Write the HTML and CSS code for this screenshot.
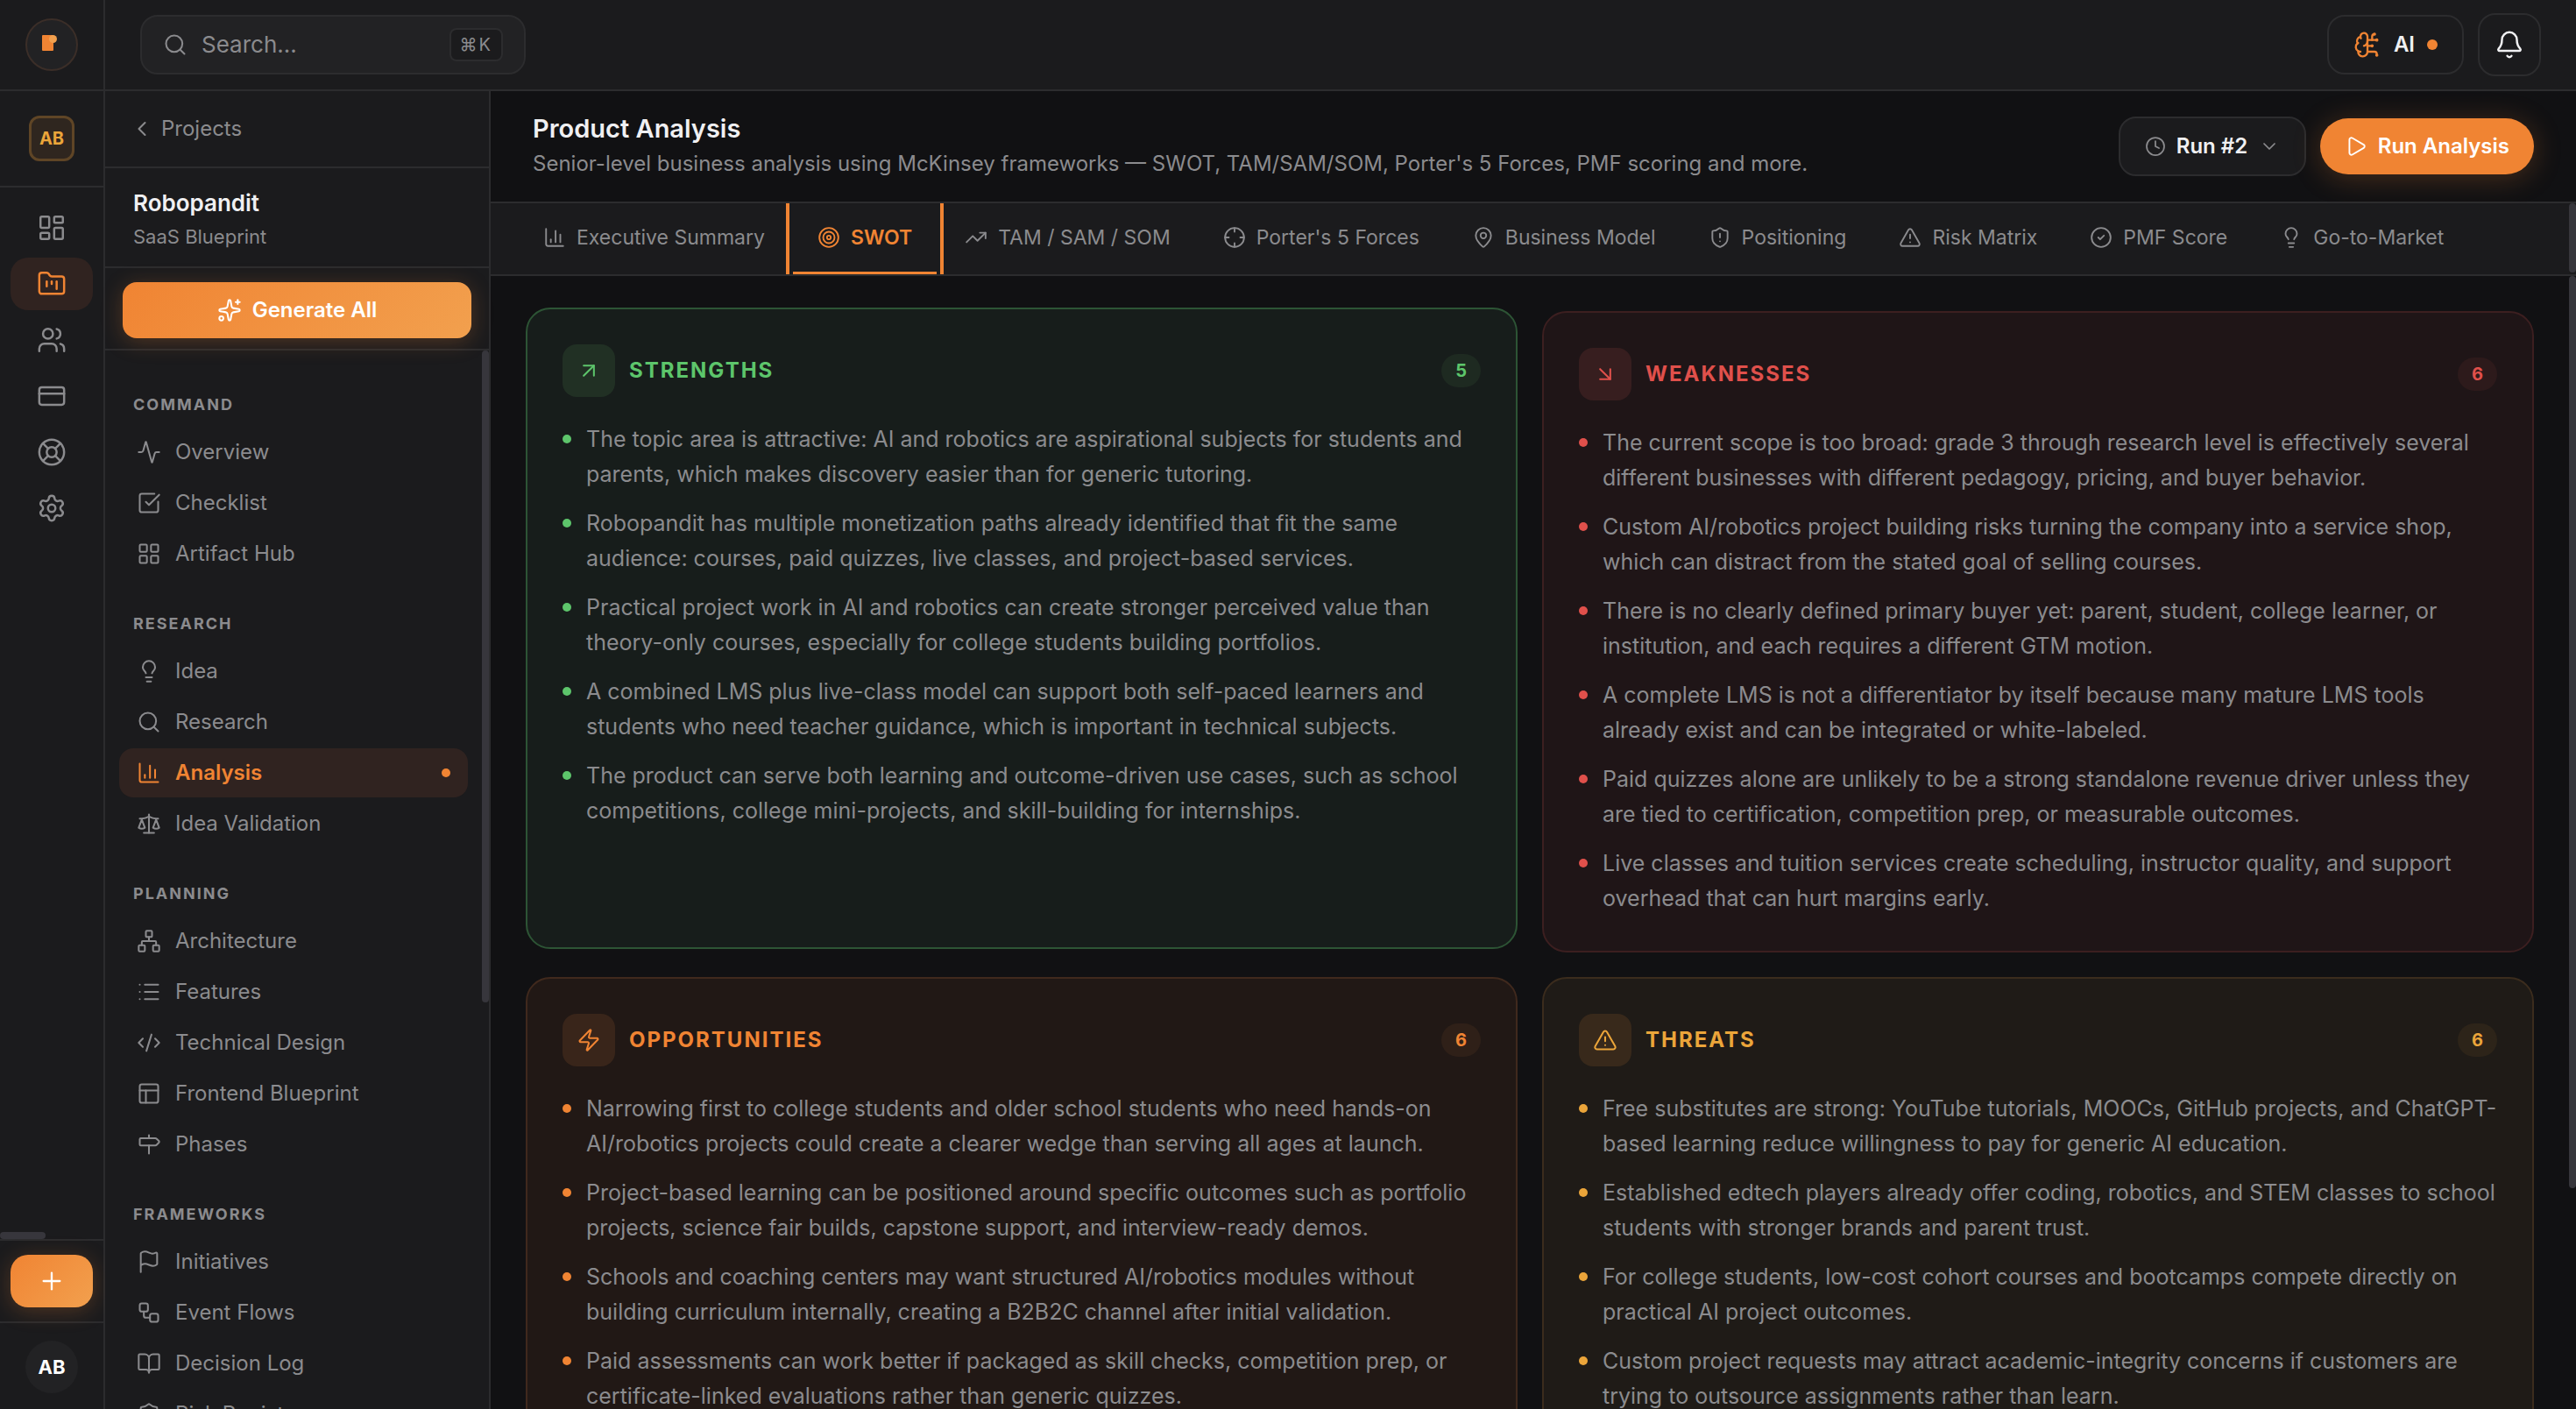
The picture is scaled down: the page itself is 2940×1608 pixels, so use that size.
FILE: index.html
```html
<!DOCTYPE html>
<html lang="en">
	<head>
		<meta charset="UTF-8" />
		<meta name="viewport" content="width=device-width, initial-scale=1.0" />
		<title>Product Analysis - Robopandit</title>
		<link rel="stylesheet" href="styles.css">
	</head>
	<body>
		<!-- icon sprite -->
		<svg class="sprite" aria-hidden="true">
			<symbol id="i-search" viewBox="0 0 24 24"><path d="m21 21-4.34-4.34" /><circle cx="11" cy="11" r="8" /></symbol>
			<symbol id="i-brain" viewBox="0 0 24 24"><path d="M12 5a3 3 0 1 0-5.997.125 4 4 0 0 0-2.526 5.77 4 4 0 0 0 .556 6.588A4 4 0 1 0 12 18Z" /><path d="M9 13a4.5 4.5 0 0 0 3-4" /><path d="M6.003 5.125A3 3 0 0 0 6.401 6.5" /><path d="M3.477 10.896a4 4 0 0 1 .585-.396" /><path d="M6 18a4 4 0 0 1-1.967-.516" /><path d="M12 13h4" /><path d="M12 18h6a2 2 0 0 1 2 2v1" /><path d="M12 8h8" /><path d="M16 8V5a2 2 0 0 1 2-2" /><circle cx="16" cy="13" r=".5" /><circle cx="18" cy="3" r=".5" /><circle cx="20" cy="21" r=".5" /><circle cx="20" cy="8" r=".5" /></symbol>
			<symbol id="i-bell" viewBox="0 0 24 24"><path d="M10.268 21a2 2 0 0 0 3.464 0" /><path d="M3.262 15.326A1 1 0 0 0 4 17h16a1 1 0 0 0 .74-1.673C19.41 13.956 18 12.499 18 8A6 6 0 0 0 6 8c0 4.499-1.411 5.956-2.738 7.326" /></symbol>
			<symbol id="i-dashboard" viewBox="0 0 24 24"><rect width="7" height="9" x="3" y="3" rx="1" /><rect width="7" height="5" x="14" y="3" rx="1" /><rect width="7" height="9" x="14" y="12" rx="1" /><rect width="7" height="5" x="3" y="16" rx="1" /></symbol>
			<symbol id="i-kanban" viewBox="0 0 24 24"><path d="M4 20h16a2 2 0 0 0 2-2V8a2 2 0 0 0-2-2h-7.93a2 2 0 0 1-1.66-.9l-.82-1.2A2 2 0 0 0 7.93 3H4a2 2 0 0 0-2 2v13c0 1.1.9 2 2 2Z" /><path d="M8 10v4" /><path d="M12 10v2" /><path d="M16 10v6" /></symbol>
			<symbol id="i-users" viewBox="0 0 24 24"><path d="M16 21v-2a4 4 0 0 0-4-4H6a4 4 0 0 0-4 4v2" /><path d="M16 3.128a4 4 0 0 1 0 7.744" /><path d="M22 21v-2a4 4 0 0 0-3-3.87" /><circle cx="9" cy="7" r="4" /></symbol>
			<symbol id="i-card" viewBox="0 0 24 24"><rect width="20" height="14" x="2" y="5" rx="2" /><path d="M2 10h20" /></symbol>
			<symbol id="i-help" viewBox="0 0 24 24"><circle cx="12" cy="12" r="10" /><path d="m4.93 4.93 4.24 4.24" /><path d="m14.83 9.17 4.24-4.24" /><path d="m14.83 14.83 4.24 4.24" /><path d="m9.17 14.83-4.24 4.24" /><circle cx="12" cy="12" r="4" /></symbol>
			<symbol id="i-settings" viewBox="0 0 24 24"><path d="M9.671 4.136a2.34 2.34 0 0 1 4.659 0 2.34 2.34 0 0 0 3.319 1.915 2.34 2.34 0 0 1 2.33 4.033 2.34 2.34 0 0 0 0 3.831 2.34 2.34 0 0 1-2.33 4.033 2.34 2.34 0 0 0-3.319 1.915 2.34 2.34 0 0 1-4.659 0 2.34 2.34 0 0 0-3.32-1.915 2.34 2.34 0 0 1-2.33-4.033 2.34 2.34 0 0 0 0-3.831A2.34 2.34 0 0 1 6.35 6.051a2.34 2.34 0 0 0 3.319-1.915" /><circle cx="12" cy="12" r="3" /></symbol>
			<symbol id="i-plus" viewBox="0 0 24 24"><path d="M5 12h14" /><path d="M12 5v14" /></symbol>
			<symbol id="i-left" viewBox="0 0 24 24"><path d="m15 18-6-6 6-6" /></symbol>
			<symbol id="i-down" viewBox="0 0 24 24"><path d="m6 9 6 6 6-6" /></symbol>
			<symbol id="i-sparkles" viewBox="0 0 24 24"><path d="M11.017 2.814a1 1 0 0 1 1.966 0l1.051 5.558a2 2 0 0 0 1.594 1.594l5.558 1.051a1 1 0 0 1 0 1.966l-5.558 1.051a2 2 0 0 0-1.594 1.594l-1.051 5.558a1 1 0 0 1-1.966 0l-1.051-5.558a2 2 0 0 0-1.594-1.594l-5.558-1.051a1 1 0 0 1 0-1.966l5.558-1.051a2 2 0 0 0 1.594-1.594z" /><path d="M20 2v4" /><path d="M22 4h-4" /><circle cx="4" cy="20" r="2" /></symbol>
			<symbol id="i-activity" viewBox="0 0 24 24"><path d="M22 12h-2.48a2 2 0 0 0-1.93 1.46l-2.35 8.36a.25.25 0 0 1-.48 0L9.24 2.18a.25.25 0 0 0-.48 0l-2.35 8.36A2 2 0 0 1 4.49 12H2" /></symbol>
			<symbol id="i-check" viewBox="0 0 24 24"><path d="M21 10.656V19a2 2 0 0 1-2 2H5a2 2 0 0 1-2-2V5a2 2 0 0 1 2-2h12.344" /><path d="m9 11 3 3L22 4" /></symbol>
			<symbol id="i-grid" viewBox="0 0 24 24"><rect width="7" height="7" x="3" y="3" rx="1" /><rect width="7" height="7" x="14" y="3" rx="1" /><rect width="7" height="7" x="14" y="14" rx="1" /><rect width="7" height="7" x="3" y="14" rx="1" /></symbol>
			<symbol id="i-bulb" viewBox="0 0 24 24"><path d="M15 14c.2-1 .7-1.7 1.5-2.5 1-.9 1.5-2.2 1.5-3.5A6 6 0 0 0 6 8c0 1 .2 2.2 1.5 3.5.7.7 1.3 1.5 1.5 2.5" /><path d="M9 18h6" /><path d="M10 22h4" /></symbol>
			<symbol id="i-chart" viewBox="0 0 24 24"><path d="M3 3v16a2 2 0 0 0 2 2h16" /><path d="M18 17V9" /><path d="M13 17V5" /><path d="M8 17v-3" /></symbol>
			<symbol id="i-scale" viewBox="0 0 24 24"><path d="m16 16 3-8 3 8c-.87.65-1.92 1-3 1s-2.13-.35-3-1Z" /><path d="m2 16 3-8 3 8c-.87.65-1.92 1-3 1s-2.13-.35-3-1Z" /><path d="M7 21h10" /><path d="M12 3v18" /><path d="M3 7h2c2 0 5-1 7-2 2 1 5 2 7 2h2" /></symbol>
			<symbol id="i-network" viewBox="0 0 24 24"><rect x="16" y="16" width="6" height="6" rx="1" /><rect x="2" y="16" width="6" height="6" rx="1" /><rect x="9" y="2" width="6" height="6" rx="1" /><path d="M5 16v-3a1 1 0 0 1 1-1h12a1 1 0 0 1 1 1v3" /><path d="M12 12V8" /></symbol>
			<symbol id="i-list" viewBox="0 0 24 24"><path d="M3 5h.01" /><path d="M3 12h.01" /><path d="M3 19h.01" /><path d="M8 5h13" /><path d="M8 12h13" /><path d="M8 19h13" /></symbol>
			<symbol id="i-code" viewBox="0 0 24 24"><path d="m18 16 4-4-4-4" /><path d="m6 8-4 4 4 4" /><path d="m14.5 4-5 16" /></symbol>
			<symbol id="i-panels" viewBox="0 0 24 24"><rect width="18" height="18" x="3" y="3" rx="2" /><path d="M3 9h18" /><path d="M9 21V9" /></symbol>
			<symbol id="i-signpost" viewBox="0 0 24 24"><path d="M12 13v8" /><path d="M12 3v3" /><path d="M18.172 6a2 2 0 0 1 1.414.586l2.06 2.06a1.207 1.207 0 0 1 0 1.708l-2.06 2.06a2 2 0 0 1-1.414.586H4a1 1 0 0 1-1-1V7a1 1 0 0 1 1-1z" /></symbol>
			<symbol id="i-flag" viewBox="0 0 24 24"><path d="M4 22V4a1 1 0 0 1 .4-.8A6 6 0 0 1 8 2c3 0 5 2 7.333 2q2 0 3.067-.8A1 1 0 0 1 20 4v10a1 1 0 0 1-.4.8A6 6 0 0 1 16 16c-3 0-5-2-8-2a6 6 0 0 0-4 1.528" /></symbol>
			<symbol id="i-flow" viewBox="0 0 24 24"><rect width="8" height="8" x="3" y="3" rx="2" /><path d="M7 11v4a2 2 0 0 0 2 2h4" /><rect width="8" height="8" x="13" y="13" rx="2" /></symbol>
			<symbol id="i-book" viewBox="0 0 24 24"><path d="M12 7v14" /><path d="M3 18a1 1 0 0 1-1-1V4a1 1 0 0 1 1-1h5a4 4 0 0 1 4 4 4 4 0 0 1 4-4h5a1 1 0 0 1 1 1v13a1 1 0 0 1-1 1h-6a3 3 0 0 0-3 3 3 3 0 0 0-3-3z" /></symbol>
			<symbol id="i-shield" viewBox="0 0 24 24"><path d="M20 13c0 5-3.5 7.5-7.66 8.95a1 1 0 0 1-.67-.01C7.5 20.5 4 18 4 13V6a1 1 0 0 1 1-1c2 0 4.5-1.2 6.24-2.72a1.17 1.17 0 0 1 1.52 0C14.51 3.81 17 5 19 5a1 1 0 0 1 1 1z" /><path d="M12 8v4" /><path d="M12 16h.01" /></symbol>
			<symbol id="i-clock" viewBox="0 0 24 24"><circle cx="12" cy="12" r="10" /><path d="M12 6v6l4 2" /></symbol>
			<symbol id="i-play" viewBox="0 0 24 24"><path d="M5 5a2 2 0 0 1 3.008-1.728l11.997 6.998a2 2 0 0 1 .003 3.458l-12 7A2 2 0 0 1 5 19z" /></symbol>
			<symbol id="i-target" viewBox="0 0 24 24"><circle cx="12" cy="12" r="10" /><circle cx="12" cy="12" r="6" /><circle cx="12" cy="12" r="2" /></symbol>
			<symbol id="i-trend" viewBox="0 0 24 24"><path d="M16 7h6v6" /><path d="m22 7-8.5 8.5-5-5L2 17" /></symbol>
			<symbol id="i-cross" viewBox="0 0 24 24"><circle cx="12" cy="12" r="10" /><path d="M22 12h-4" /><path d="M6 12H2" /><path d="M12 6V2" /><path d="M12 22v-4" /></symbol>
			<symbol id="i-pin" viewBox="0 0 24 24"><path d="M20 10c0 4.993-5.539 10.193-7.399 11.799a1 1 0 0 1-1.202 0C9.539 20.193 4 14.993 4 10a8 8 0 0 1 16 0" /><circle cx="12" cy="10" r="3" /></symbol>
			<symbol id="i-warn" viewBox="0 0 24 24"><path d="m21.73 18-8-14a2 2 0 0 0-3.48 0l-8 14A2 2 0 0 0 4 21h16a2 2 0 0 0 1.73-3" /><path d="M12 9v4" /><path d="M12 17h.01" /></symbol>
			<symbol id="i-circle-check" viewBox="0 0 24 24"><circle cx="12" cy="12" r="10" /><path d="m9 12 2 2 4-4" /></symbol>
			<symbol id="i-up-right" viewBox="0 0 24 24"><path d="M7 7h10v10" /><path d="M7 17 17 7" /></symbol>
			<symbol id="i-down-right" viewBox="0 0 24 24"><path d="m7 7 10 10" /><path d="M17 7v10H7" /></symbol>
			<symbol id="i-zap" viewBox="0 0 24 24"><path d="M4 14a1 1 0 0 1-.78-1.63l9.9-10.2a.5.5 0 0 1 .86.46l-1.92 6.02A1 1 0 0 0 13 10h7a1 1 0 0 1 .78 1.63l-9.9 10.2a.5.5 0 0 1-.86-.46l1.92-6.02A1 1 0 0 0 11 14z" /></symbol>
		</svg>

		<div class="app">
			<aside class="rail">
				<div class="rail-logo">
					<a class="logo" href="#" aria-label="Home">
						<svg viewBox="0 0 56 56">
							<rect x="17" y="17" width="13" height="18" rx="1" fill="#f08433" />
							<circle cx="29.5" cy="21.5" r="4.5" fill="#f2a04e" />
						</svg>
					</a>
				</div>
				<div class="rail-team"><button class="team" type="button">AB</button></div>
				<nav class="rail-nav" aria-label="Main">
					<a class="rail-link" href="#" aria-label="Dashboard"><svg class="icon"><use href="#i-dashboard" /></svg></a>
					<a class="rail-link active" href="#" aria-label="Projects"><svg class="icon"><use href="#i-kanban" /></svg></a>
					<a class="rail-link" href="#" aria-label="Team"><svg class="icon"><use href="#i-users" /></svg></a>
					<a class="rail-link" href="#" aria-label="Billing"><svg class="icon"><use href="#i-card" /></svg></a>
					<a class="rail-link" href="#" aria-label="Support"><svg class="icon"><use href="#i-help" /></svg></a>
					<a class="rail-link" href="#" aria-label="Settings"><svg class="icon"><use href="#i-settings" /></svg></a>
					<span class="thumb thumb-x"></span>
				</nav>
				<div class="rail-add">
					<button class="add" type="button" aria-label="New project"><svg class="icon"><use href="#i-plus" /></svg></button>
				</div>
				<div class="rail-user"><button class="avatar" type="button">AB</button></div>
			</aside>

			<div class="shell">
				<header class="topbar">
					<label class="search">
						<svg class="icon"><use href="#i-search" /></svg>
						<input type="text" placeholder="Search..." aria-label="Search" />
						<kbd>⌘K</kbd>
					</label>
					<div class="topbar-actions">
						<button class="ai" type="button">
							<svg class="icon"><use href="#i-brain" /></svg>
							<span>AI</span>
							<i class="dot"></i>
						</button>
						<button class="bell" type="button" aria-label="Notifications"><svg class="icon"><use href="#i-bell" /></svg></button>
					</div>
				</header>

				<div class="body">
					<aside class="sidebar">
						<a class="back" href="#"><svg class="icon"><use href="#i-left" /></svg>Projects</a>
						<div class="project">
							<h2>Robopandit</h2>
							<p>SaaS Blueprint</p>
						</div>
						<div class="generate">
							<button type="button"><svg class="icon"><use href="#i-sparkles" /></svg>Generate All</button>
						</div>
						<nav class="menu" aria-label="Project">
							<section>
								<h3>COMMAND</h3>
								<a href="#"><svg class="icon"><use href="#i-activity" /></svg>Overview</a>
								<a href="#"><svg class="icon"><use href="#i-check" /></svg>Checklist</a>
								<a href="#"><svg class="icon"><use href="#i-grid" /></svg>Artifact Hub</a>
							</section>
							<section>
								<h3>RESEARCH</h3>
								<a href="#"><svg class="icon"><use href="#i-bulb" /></svg>Idea</a>
								<a href="#"><svg class="icon"><use href="#i-search" /></svg>Research</a>
								<a class="active" href="#"><svg class="icon"><use href="#i-chart" /></svg>Analysis<i class="dot"></i></a>
								<a href="#"><svg class="icon"><use href="#i-scale" /></svg>Idea Validation</a>
							</section>
							<section>
								<h3>PLANNING</h3>
								<a href="#"><svg class="icon"><use href="#i-network" /></svg>Architecture</a>
								<a href="#"><svg class="icon"><use href="#i-list" /></svg>Features</a>
								<a href="#"><svg class="icon"><use href="#i-code" /></svg>Technical Design</a>
								<a href="#"><svg class="icon"><use href="#i-panels" /></svg>Frontend Blueprint</a>
								<a href="#"><svg class="icon"><use href="#i-signpost" /></svg>Phases</a>
							</section>
							<section>
								<h3>FRAMEWORKS</h3>
								<a href="#"><svg class="icon"><use href="#i-flag" /></svg>Initiatives</a>
								<a href="#"><svg class="icon"><use href="#i-flow" /></svg>Event Flows</a>
								<a href="#"><svg class="icon"><use href="#i-book" /></svg>Decision Log</a>
								<a href="#"><svg class="icon"><use href="#i-shield" /></svg>Risk Register</a>
							</section>
							<span class="thumb thumb-menu"></span>
						</nav>
					</aside>

					<main class="main">
						<div class="page-head">
							<div class="page-title">
								<h1>Product Analysis</h1>
								<p>Senior-level business analysis using McKinsey frameworks — SWOT, TAM/SAM/SOM, Porter's 5 Forces, PMF scoring and more.</p>
							</div>
							<div class="page-actions">
								<label class="run-select">
									<svg class="icon"><use href="#i-clock" /></svg>
									<select aria-label="Analysis run">
										<option>Run #2</option>
									</select>
									<svg class="icon"><use href="#i-down" /></svg>
								</label>
								<button class="run" type="button"><svg class="icon"><use href="#i-play" /></svg>Run Analysis</button>
							</div>
						</div>

						<nav class="tabs" aria-label="Analysis sections">
							<a href="#"><svg class="icon"><use href="#i-chart" /></svg>Executive Summary</a>
							<a class="active" href="#"><svg class="icon"><use href="#i-target" /></svg>SWOT</a>
							<a href="#"><svg class="icon"><use href="#i-trend" /></svg>TAM / SAM / SOM</a>
							<a href="#"><svg class="icon"><use href="#i-cross" /></svg>Porter's 5 Forces</a>
							<a href="#"><svg class="icon"><use href="#i-pin" /></svg>Business Model</a>
							<a href="#"><svg class="icon"><use href="#i-shield" /></svg>Positioning</a>
							<a href="#"><svg class="icon"><use href="#i-warn" /></svg>Risk Matrix</a>
							<a href="#"><svg class="icon"><use href="#i-circle-check" /></svg>PMF Score</a>
							<a href="#"><svg class="icon"><use href="#i-bulb" /></svg>Go-to-Market</a>
							<span class="thumb thumb-tabs"></span>
						</nav>

						<div class="content">
							<div class="swot">
								<section class="card strengths">
									<header>
										<span class="card-icon"><svg class="icon"><use href="#i-up-right" /></svg></span>
										<h2>STRENGTHS</h2>
										<span class="count">5</span>
									</header>
									<ul>
										<li>The topic area is attractive: AI and robotics are aspirational subjects for students and parents, which makes discovery easier than for generic tutoring.</li>
										<li>Robopandit has multiple monetization paths already identified that fit the same audience: courses, paid quizzes, live classes, and project-based services.</li>
										<li>Practical project work in AI and robotics can create stronger perceived value than theory-only courses, especially for college students building portfolios.</li>
										<li>A combined LMS plus live-class model can support both self-paced learners and students who need teacher guidance, which is important in technical subjects.</li>
										<li>The product can serve both learning and outcome-driven use cases, such as school competitions, college mini-projects, and skill-building for internships.</li>
									</ul>
								</section>
								<section class="card weaknesses">
									<header>
										<span class="card-icon"><svg class="icon"><use href="#i-down-right" /></svg></span>
										<h2>WEAKNESSES</h2>
										<span class="count">6</span>
									</header>
									<ul>
										<li>The current scope is too broad: grade 3 through research level is effectively several different businesses with different pedagogy, pricing, and buyer behavior.</li>
										<li>Custom AI/robotics project building risks turning the company into a service shop, which can distract from the stated goal of selling courses.</li>
										<li>There is no clearly defined primary buyer yet: parent, student, college learner, or institution, and each requires a different GTM motion.</li>
										<li>A complete LMS is not a differentiator by itself because many mature LMS tools already exist and can be integrated or white-labeled.</li>
										<li>Paid quizzes alone are unlikely to be a strong standalone revenue driver unless they are tied to certification, competition prep, or measurable outcomes.</li>
										<li>Live classes and tuition services create scheduling, instructor quality, and support overhead that can hurt margins early.</li>
									</ul>
								</section>
								<section class="card opportunities">
									<header>
										<span class="card-icon"><svg class="icon"><use href="#i-zap" /></svg></span>
										<h2>OPPORTUNITIES</h2>
										<span class="count">6</span>
									</header>
									<ul>
										<li>Narrowing first to college students and older school students who need hands-on AI/robotics projects could create a clearer wedge than serving all ages at launch.</li>
										<li>Project-based learning can be positioned around specific outcomes such as portfolio projects, science fair builds, capstone support, and interview-ready demos.</li>
										<li>Schools and coaching centers may want structured AI/robotics modules without building curriculum internally, creating a B2B2C channel after initial validation.</li>
										<li>Paid assessments can work better if packaged as skill checks, competition prep, or certificate-linked evaluations rather than generic quizzes.</li>
									</ul>
								</section>
								<section class="card threats">
									<header>
										<span class="card-icon"><svg class="icon"><use href="#i-warn" /></svg></span>
										<h2>THREATS</h2>
										<span class="count">6</span>
									</header>
									<ul>
										<li>Free substitutes are strong: YouTube tutorials, MOOCs, GitHub projects, and ChatGPT-based learning reduce willingness to pay for generic AI education.</li>
										<li>Established edtech players already offer coding, robotics, and STEM classes to school students with stronger brands and parent trust.</li>
										<li>For college students, low-cost cohort courses and bootcamps compete directly on practical AI project outcomes.</li>
										<li>Custom project requests may attract academic-integrity concerns if customers are trying to outsource assignments rather than learn.</li>
									</ul>
								</section>
							</div>
							<span class="thumb thumb-content"></span>
						</div>
					</main>
				</div>
			</div>
		</div>
	</body>
</html>
```
FILE: styles.css
```css
:root {
	--bg: #111113;
	--panel: #1b1b1d;
	--raised: #222224;
	--line: #2c2c2e;
	--text: #f0f0f2;
	--muted: #8b8b8e;
	--orange: #f08433;
	--amber: #eba53a;
	--green: #5dc56b;
	--red: #e0504b;
}
* {
	box-sizing: border-box;
	padding: 0;
	margin: 0;
}
body {
	height: 100vh;
	overflow: hidden;
	background: var(--bg);
	color: var(--muted);
	font-family: Inter, 'Noto Sans', sans-serif;
	font-size: 24px;
	line-height: 32px;
}
a {
	color: inherit;
	text-decoration: none;
}
button,
input,
select {
	border: none;
	background: none;
	color: inherit;
	font: inherit;
}
ul {
	list-style: none;
}
.sprite {
	display: none;
}
.icon {
	flex: none;
	width: 28px;
	height: 28px;
	fill: none;
	stroke: currentColor;
	stroke-width: 1.75;
	stroke-linecap: round;
	stroke-linejoin: round;
}
.dot {
	width: 12px;
	height: 12px;
	border-radius: 50%;
	background: var(--orange);
}
.app {
	display: flex;
	height: 100vh;
}

/* left rail */
.rail {
	display: flex;
	flex: none;
	flex-direction: column;
	width: 120px;
	border-right: 2px solid var(--line);
	background: var(--panel);
}
.rail-logo,
.rail-team {
	display: flex;
	align-items: center;
	justify-content: center;
	border-bottom: 2px solid var(--line);
}
.rail-logo {
	height: 104px;
}
.rail-team {
	height: 110px;
}
.logo {
	width: 60px;
	height: 60px;
	border: 2px solid #3b2e28;
	border-radius: 50%;
	background: var(--raised);
}
.logo svg {
	display: block;
}
.team {
	width: 52px;
	height: 52px;
	border: 3px solid #5f4526;
	border-radius: 12px;
	background: #2f261f;
	color: var(--amber);
	font-size: 20px;
	font-weight: 700;
}
.rail-nav {
	position: relative;
	display: flex;
	flex: 1;
	flex-direction: column;
	gap: 4px;
	padding: 16px 12px;
}
.rail-link {
	display: flex;
	align-items: center;
	justify-content: center;
	height: 60px;
	border-radius: 20px;
}
.rail-link .icon {
	width: 34px;
	height: 34px;
}
.rail-link.active {
	background: #302320;
	color: var(--orange);
}
.rail-add {
	padding: 16px 12px;
	border-top: 2px solid var(--line);
	border-bottom: 2px solid var(--line);
}
.add {
	display: flex;
	align-items: center;
	justify-content: center;
	width: 100%;
	height: 60px;
	border-radius: 20px;
	background: linear-gradient(135deg, #f08433, #f2a04e);
	box-shadow: 0 4px 24px rgba(240, 132, 51, 0.25);
	color: #fff;
}
.add .icon {
	width: 32px;
	height: 32px;
}
.rail-user {
	display: flex;
	justify-content: center;
	padding: 20px 0 18px;
}
.avatar {
	width: 60px;
	height: 60px;
	border-radius: 50%;
	background: var(--raised);
	color: #fff;
	font-size: 22px;
	font-weight: 700;
}

/* scroll thumbs */
.thumb {
	position: absolute;
	border-radius: 4px;
	background: #37363c;
}
.thumb-x {
	bottom: 0;
	left: 0;
	width: 52px;
	height: 8px;
}
.thumb-menu,
.thumb-tabs,
.thumb-content {
	top: 0;
	right: 0;
	width: 8px;
}
.thumb-menu {
	height: 744px;
}
.thumb-tabs {
	height: 79px;
}
.thumb-content {
	height: 1041px;
}

/* top bar */
.shell {
	display: flex;
	flex: 1;
	flex-direction: column;
	min-width: 0;
}
.topbar {
	display: flex;
	flex: none;
	align-items: center;
	justify-content: space-between;
	height: 104px;
	padding: 0 40px;
	border-bottom: 2px solid var(--line);
	background: var(--panel);
}
.search {
	display: flex;
	align-items: center;
	gap: 16px;
	width: 440px;
	height: 68px;
	padding: 0 24px;
	border: 2px solid var(--line);
	border-radius: 20px;
	background: var(--raised);
}
.search input {
	flex: 1;
	min-width: 0;
	outline: none;
	font-size: 26px;
}
.search input::placeholder {
	color: var(--muted);
}
.search kbd {
	padding: 1px 10px;
	border: 2px solid var(--line);
	border-radius: 8px;
	background: var(--panel);
	font-family: Inter, 'Noto Sans', sans-serif;
	font-size: 20px;
	letter-spacing: 2px;
}
.topbar-actions {
	display: flex;
	align-items: center;
	gap: 16px;
}
.ai,
.bell {
	display: flex;
	align-items: center;
	justify-content: center;
	border: 2px solid var(--line);
	border-radius: 20px;
	color: var(--text);
}
.ai {
	gap: 14px;
	height: 68px;
	padding: 0 28px;
	font-weight: 600;
}
.ai .icon {
	width: 32px;
	height: 32px;
	color: var(--orange);
}
.bell {
	width: 72px;
	height: 72px;
}
.bell .icon {
	width: 34px;
	height: 34px;
}

/* project sidebar */
.body {
	display: flex;
	flex: 1;
	min-height: 0;
}
.sidebar {
	display: flex;
	flex: none;
	flex-direction: column;
	width: 440px;
	border-right: 2px solid var(--line);
	background: var(--panel);
}
.back {
	display: flex;
	align-items: center;
	gap: 8px;
	height: 88px;
	padding: 0 28px;
	border-bottom: 2px solid var(--line);
}
.project {
	padding: 20px 32px 16px;
	border-bottom: 2px solid var(--line);
}
.project h2 {
	color: var(--text);
	font-size: 26px;
	font-weight: 600;
	line-height: 40px;
}
.project p {
	font-size: 22px;
	line-height: 36px;
}
.generate {
	padding: 16px 20px 12px;
	border-bottom: 2px solid var(--line);
}
.generate button {
	display: flex;
	align-items: center;
	justify-content: center;
	gap: 12px;
	width: 100%;
	height: 64px;
	border-radius: 16px;
	background: linear-gradient(135deg, #f08433, #f2a04e);
	box-shadow: 0 4px 24px rgba(240, 132, 51, 0.25);
	color: #fff;
	font-weight: 600;
}
.menu {
	position: relative;
	flex: 1;
	min-height: 0;
	padding: 48px 24px 0 16px;
	overflow: hidden;
}
.menu section {
	display: flex;
	flex-direction: column;
	gap: 2px;
	margin-bottom: 38px;
}
.menu h3 {
	padding: 0 16px 10px;
	font-size: 18px;
	font-weight: 700;
	line-height: 28px;
	letter-spacing: 2px;
}
.menu a {
	display: flex;
	align-items: center;
	gap: 16px;
	height: 56px;
	padding: 0 20px;
	border-radius: 16px;
}
.menu a.active {
	background: #302320;
	color: var(--orange);
	font-weight: 600;
}
.menu .dot {
	width: 10px;
	height: 10px;
	margin-left: auto;
}

/* page */
.main {
	display: flex;
	flex: 1;
	flex-direction: column;
	min-width: 0;
}
.page-head {
	display: flex;
	flex: none;
	align-items: center;
	justify-content: space-between;
	height: 128px;
	padding: 0 48px;
	border-bottom: 2px solid var(--line);
}
.page-title {
	padding-bottom: 4px;
}
.page-head h1 {
	color: var(--text);
	font-size: 29px;
	font-weight: 600;
	line-height: 44px;
}
.page-head p {
	line-height: 36px;
}
.page-actions {
	display: flex;
	align-items: center;
	gap: 16px;
}
.run-select,
.run {
	display: flex;
	align-items: center;
	gap: 12px;
	font-weight: 600;
}
.run-select {
	height: 68px;
	padding: 0 28px;
	border: 2px solid var(--line);
	border-radius: 20px;
	background: var(--panel);
}
.run-select select {
	appearance: none;
	outline: none;
	color: var(--text);
}
.run-select .icon {
	width: 24px;
	height: 24px;
}
.run {
	height: 64px;
	padding: 0 28px;
	border-radius: 32px;
	background: var(--orange);
	box-shadow: 0 4px 32px rgba(240, 132, 51, 0.25);
	color: #fff;
}
.run .icon {
	width: 26px;
	height: 26px;
}

/* tabs */
.tabs {
	position: relative;
	display: flex;
	flex: none;
	gap: 4px;
	height: 83px;
	padding: 0 32px;
	overflow: hidden;
	border-bottom: 2px solid var(--line);
	background: var(--panel);
	font-size: 23px;
}
.tabs a {
	display: flex;
	align-items: center;
	gap: 12px;
	padding: 0 28px;
	border-bottom: 3px solid transparent;
	white-space: nowrap;
}
.tabs .icon {
	width: 26px;
	height: 26px;
}
.tabs a.active {
	border-color: var(--orange);
	outline: 4px solid var(--orange);
	outline-offset: 4px;
	color: var(--orange);
	font-weight: 600;
}

/* swot cards */
.content {
	position: relative;
	flex: 1;
	min-height: 0;
	padding: 40px 48px 0 40px;
	overflow: hidden;
}
.swot {
	display: grid;
	grid-template-columns: 1fr 1fr;
	gap: 28px;
}
.card {
	padding: 40px;
	border: 2px solid;
	border-radius: 28px;
}
.card header {
	display: flex;
	align-items: center;
	gap: 16px;
	margin-bottom: 28px;
}
.card-icon {
	display: flex;
	align-items: center;
	justify-content: center;
	width: 60px;
	height: 60px;
	border-radius: 16px;
}
.card h2 {
	flex: 1;
	font-size: 24px;
	font-weight: 700;
	letter-spacing: 2px;
}
.count {
	padding: 3px 16px;
	border-radius: 19px;
	font-size: 20px;
	font-weight: 700;
}
.card ul {
	display: flex;
	flex-direction: column;
	gap: 16px;
}
.card li {
	display: flex;
	gap: 17px;
	font-size: 25px;
	line-height: 40px;
}
.card li::before {
	content: '';
	flex: none;
	width: 10px;
	height: 10px;
	margin-top: 15px;
	border-radius: 50%;
	background: var(--accent);
}
.card h2,
.card .icon,
.count {
	color: var(--accent);
}
.strengths {
	--accent: var(--green);
	border-color: #2d5435;
	background: #171d1b;
	/* hover lift */
	transform: translateY(-4px);
}
.strengths .card-icon {
	background: #213024;
}
.strengths .count {
	background: #1e2a21;
}
.weaknesses {
	--accent: var(--red);
	border-color: #3c1f20;
	background: #1f1517;
}
.weaknesses .card-icon {
	background: #371e1f;
}
.weaknesses .count {
	background: #2d1a1b;
}
.opportunities {
	--accent: var(--orange);
	border-color: #40291d;
	background: #211815;
}
.opportunities .card-icon {
	background: #39251a;
}
.opportunities .count {
	background: #2f2018;
}
.threats {
	--accent: var(--amber);
	border-color: #3b2c1d;
	background: #1f1b17;
}
.threats .card-icon {
	background: #38291b;
}
.threats .count {
	background: #2d2419;
}
```
